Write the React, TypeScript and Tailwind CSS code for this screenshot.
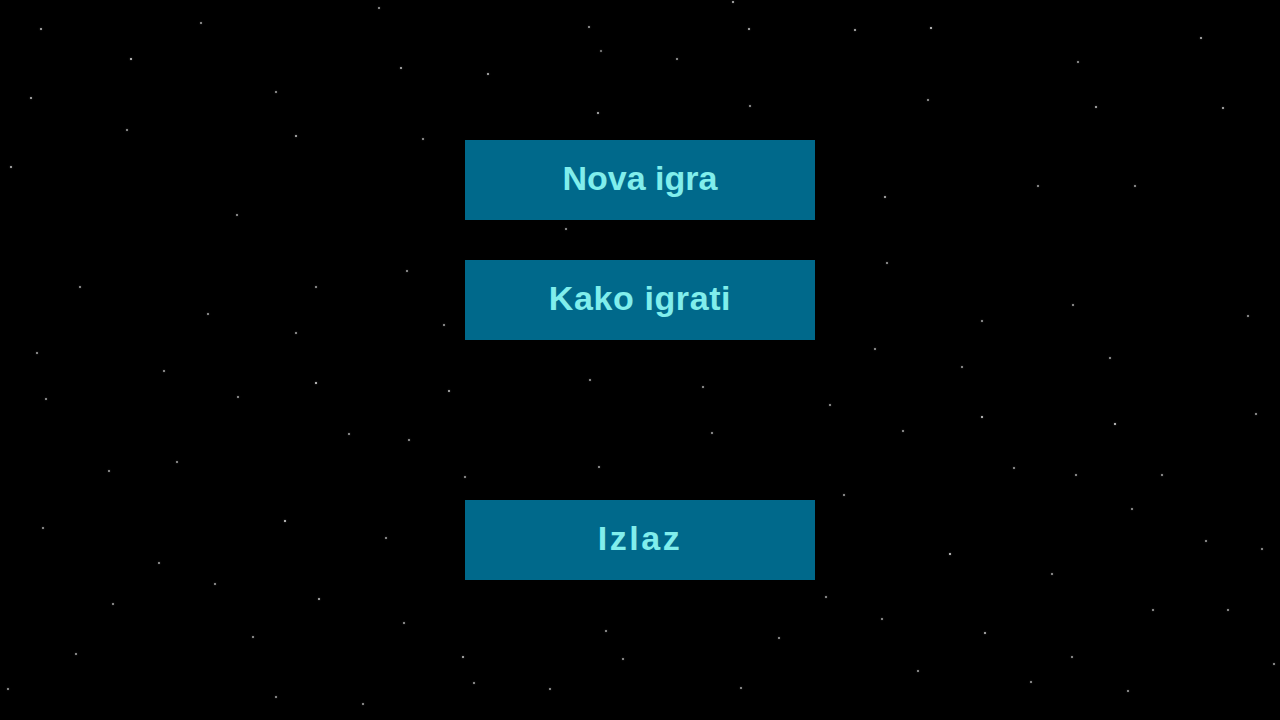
import React from "react";

// star field: [x, y, brightness]
const stars: [number, number, number][] = [
  [40, 28, 0.7], [130, 58, 0.8], [200, 22, 0.6], [295, 135, 0.7], [400, 67, 0.7], [378, 7, 0.6],
  [487, 73, 0.7], [588, 26, 0.6], [600, 50, 0.5], [597, 112, 0.7], [676, 58, 0.6], [732, 1, 0.7],
  [748, 28, 0.7], [749, 105, 0.6], [854, 29, 0.7], [930, 27, 0.8], [927, 99, 0.6], [1077, 61, 0.6],
  [1200, 37, 0.7], [1095, 106, 0.7], [1222, 107, 0.7], [1134, 185, 0.6], [1037, 185, 0.6],
  [884, 196, 0.7], [30, 97, 0.7], [126, 129, 0.6], [10, 166, 0.7], [236, 214, 0.6], [275, 91, 0.6],
  [422, 138, 0.6], [406, 270, 0.6], [295, 332, 0.6], [315, 286, 0.6], [207, 313, 0.6], [79, 286, 0.6],
  [36, 352, 0.6], [163, 370, 0.6], [45, 398, 0.6], [315, 382, 0.8], [237, 396, 0.6], [348, 433, 0.6],
  [408, 439, 0.6], [443, 324, 0.6], [448, 390, 0.7], [589, 379, 0.6], [565, 228, 0.6], [702, 386, 0.6],
  [711, 432, 0.6], [829, 404, 0.6], [874, 348, 0.6], [886, 262, 0.6], [981, 320, 0.6], [961, 366, 0.6],
  [1072, 304, 0.6], [1109, 357, 0.6], [1247, 315, 0.6], [981, 416, 0.8], [1114, 423, 0.8],
  [1255, 413, 0.6], [902, 430, 0.6], [1013, 467, 0.6], [1075, 474, 0.6], [1161, 474, 0.6],
  [1131, 508, 0.6], [1261, 548, 0.6], [1205, 540, 0.6], [1051, 573, 0.6], [949, 553, 0.8],
  [843, 494, 0.6], [825, 596, 0.6], [881, 618, 0.6], [984, 632, 0.7], [1071, 656, 0.6], [1152, 609, 0.6],
  [1227, 609, 0.6], [1030, 681, 0.6], [1127, 690, 0.6], [1273, 663, 0.6], [917, 670, 0.6],
  [778, 637, 0.6], [740, 687, 0.6], [622, 658, 0.6], [605, 630, 0.6], [549, 688, 0.6], [462, 656, 0.7],
  [473, 682, 0.6], [362, 703, 0.6], [275, 696, 0.6], [252, 636, 0.6], [318, 598, 0.7], [403, 622, 0.6],
  [385, 537, 0.6], [284, 520, 0.8], [214, 583, 0.6], [158, 562, 0.6], [112, 603, 0.6], [42, 527, 0.6],
  [108, 470, 0.6], [176, 461, 0.6], [75, 653, 0.6], [7, 688, 0.6], [598, 466, 0.6], [464, 476, 0.6],
];

const MenuButton = ({ label, spacing }: { label: string; spacing: string }) => (
  <button
    className={`w-[350px] h-[80px] bg-[#00698b] text-[#80eeec] text-[34px] font-bold flex items-center justify-center pb-[3px] ${spacing}`}
    style={{ fontFamily: '"Liberation Sans", Arial, sans-serif' }}
  >
    {label}
  </button>
);

export default function App() {
  return (
    <div className="relative w-full h-screen bg-black overflow-hidden">
      {/* stars */}
      {stars.map(([x, y, b], i) => (
        <div
          key={i}
          className="absolute w-[2px] h-[2px] bg-[#d8d8d8] shadow-[0_0_2px_rgba(255,255,255,0.4)]"
          style={{ left: x, top: y, opacity: b }}
        />
      ))}

      <div className="relative flex flex-col items-center pt-[140px]">
        <MenuButton label="Nova igra" spacing="tracking-normal" />
        <div className="mt-[40px]">
          <MenuButton label="Kako igrati" spacing="tracking-[0.6px]" />
        </div>
        <div className="mt-[160px]">
          <MenuButton label="Izlaz" spacing="tracking-[2.5px]" />
        </div>
      </div>
    </div>
  );
}
